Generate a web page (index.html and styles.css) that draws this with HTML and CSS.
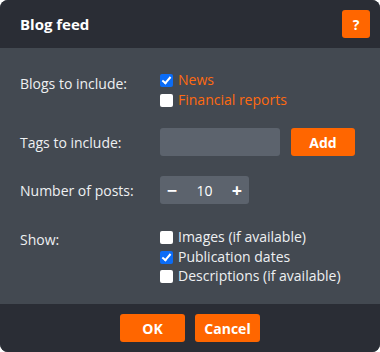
FILE: index.html
```html
<!DOCTYPE html>
<html lang="en">
<head>
    <meta charset="UTF-8">
    <meta name="viewport" content="width=device-width, initial-scale=1.0">
    <title>Blog feed</title>
    <link rel="stylesheet" href="styles.css">
</head>
<body>
    <div class="dialog">
        <header class="dialog-header">
            <h1 class="dialog-title">Blog feed</h1>
            <button class="help-btn">?</button>
        </header>
        <main class="dialog-body">
            <div class="field field-blogs">
                <div class="field-label top">Blogs to include:</div>
                <ul class="check-list orange">
                    <li><span class="check checked"></span>News</li>
                    <li><span class="check"></span>Financial reports</li>
                </ul>
            </div>
            <div class="field field-tags">
                <div class="field-label">Tags to include:</div>
                <div class="tag-input"></div>
                <button class="btn btn-add">Add</button>
            </div>
            <div class="field field-posts">
                <div class="field-label">Number of posts:</div>
                <div class="stepper">
                    <span class="step">&minus;</span>
                    <span class="step-value">10</span>
                    <span class="step">+</span>
                </div>
            </div>
            <div class="field field-show">
                <div class="field-label top-show">Show:</div>
                <ul class="check-list">
                    <li><span class="check"></span>Images (if available)</li>
                    <li><span class="check checked"></span>Publication dates</li>
                    <li><span class="check"></span>Descriptions (if available)</li>
                </ul>
            </div>
        </main>
        <footer class="dialog-footer">
            <button class="btn">OK</button>
            <button class="btn">Cancel</button>
        </footer>
    </div>
</body>
</html>
```

FILE: styles.css
```css
body {
    margin: 0;
    padding: 0;
    background-color: #fff;
    font-family: "Open Sans", "Noto Sans", sans-serif;
    font-size: 14px;
    color: #eef0f2;
}

.dialog {
    width: 380px;
    height: 352px;
    display: flex;
    flex-direction: column;
    border-radius: 8px;
    overflow: hidden;
    background-color: #434951;
}

.dialog-header {
    height: 48px;
    flex-shrink: 0;
    display: flex;
    align-items: center;
    justify-content: space-between;
    padding: 0 10px 0 20px;
    background-color: #2a2d35;
    box-sizing: border-box;
}

.dialog-title {
    margin: 0 0 1px;
    font-size: 15px;
    font-weight: bold;
    color: #fff;
}

button {
    font-family: inherit;
    border: none;
    cursor: pointer;
}

.help-btn {
    width: 28px;
    height: 28px;
    padding: 0;
    border-radius: 3px;
    background-color: #ff6600;
    color: #fff;
    font-size: 14px;
    font-weight: bold;
}

.dialog-body {
    flex: 1;
    padding: 22px 20px 0;
}

.field {
    display: flex;
    align-items: center;
}

.field-blogs,
.field-show {
    align-items: flex-start;
}

.field-tags {
    margin-top: 19px;
}

.field-posts {
    margin-top: 20px;
}

.field-show {
    margin-top: 23px;
}

.field-label {
    width: 140px;
    flex-shrink: 0;
}

.field-label.top {
    padding-top: 4px;
}

.field-label.top-show {
    padding-top: 3px;
}

.check-list {
    list-style: none;
    margin: 0;
    padding: 0;
    line-height: 19.5px;
}

.check-list li {
    display: flex;
    align-items: center;
}

.check-list.orange {
    color: #ff6a10;
}

.check {
    width: 13px;
    height: 13px;
    margin: 2px 5px 0 0;
    border-radius: 2px;
    background-color: #fff;
    position: relative;
    flex-shrink: 0;
}

.check.checked {
    background-color: #0b6cf6;
}

.check.checked::after {
    content: "";
    position: absolute;
    left: 4px;
    top: 1px;
    width: 3px;
    height: 7px;
    border-right: 2px solid #fff;
    border-bottom: 2px solid #fff;
    transform: rotate(40deg);
}

.tag-input {
    width: 120px;
    height: 28px;
    border-radius: 3px;
    background-color: #5c636d;
}

.btn {
    width: 65px;
    height: 28px;
    padding: 0;
    border-radius: 3px;
    background-color: #ff6600;
    color: #fff;
    font-size: 14px;
    font-weight: bold;
}

.btn-add {
    width: 64px;
    margin-left: 11px;
}

.stepper {
    display: flex;
    align-items: center;
    width: 89px;
    height: 28px;
    border-radius: 3px;
    background-color: #5c636d;
}

.step {
    width: 24px;
    text-align: center;
    font-size: 18px;
    font-weight: bold;
    line-height: 20px;
    color: #fff;
}

.step-value {
    width: 41px;
    text-align: center;
    color: #fff;
}

.dialog-footer {
    height: 48px;
    flex-shrink: 0;
    display: flex;
    align-items: center;
    justify-content: center;
    gap: 10px;
    background-color: #2a2d35;
}
```
